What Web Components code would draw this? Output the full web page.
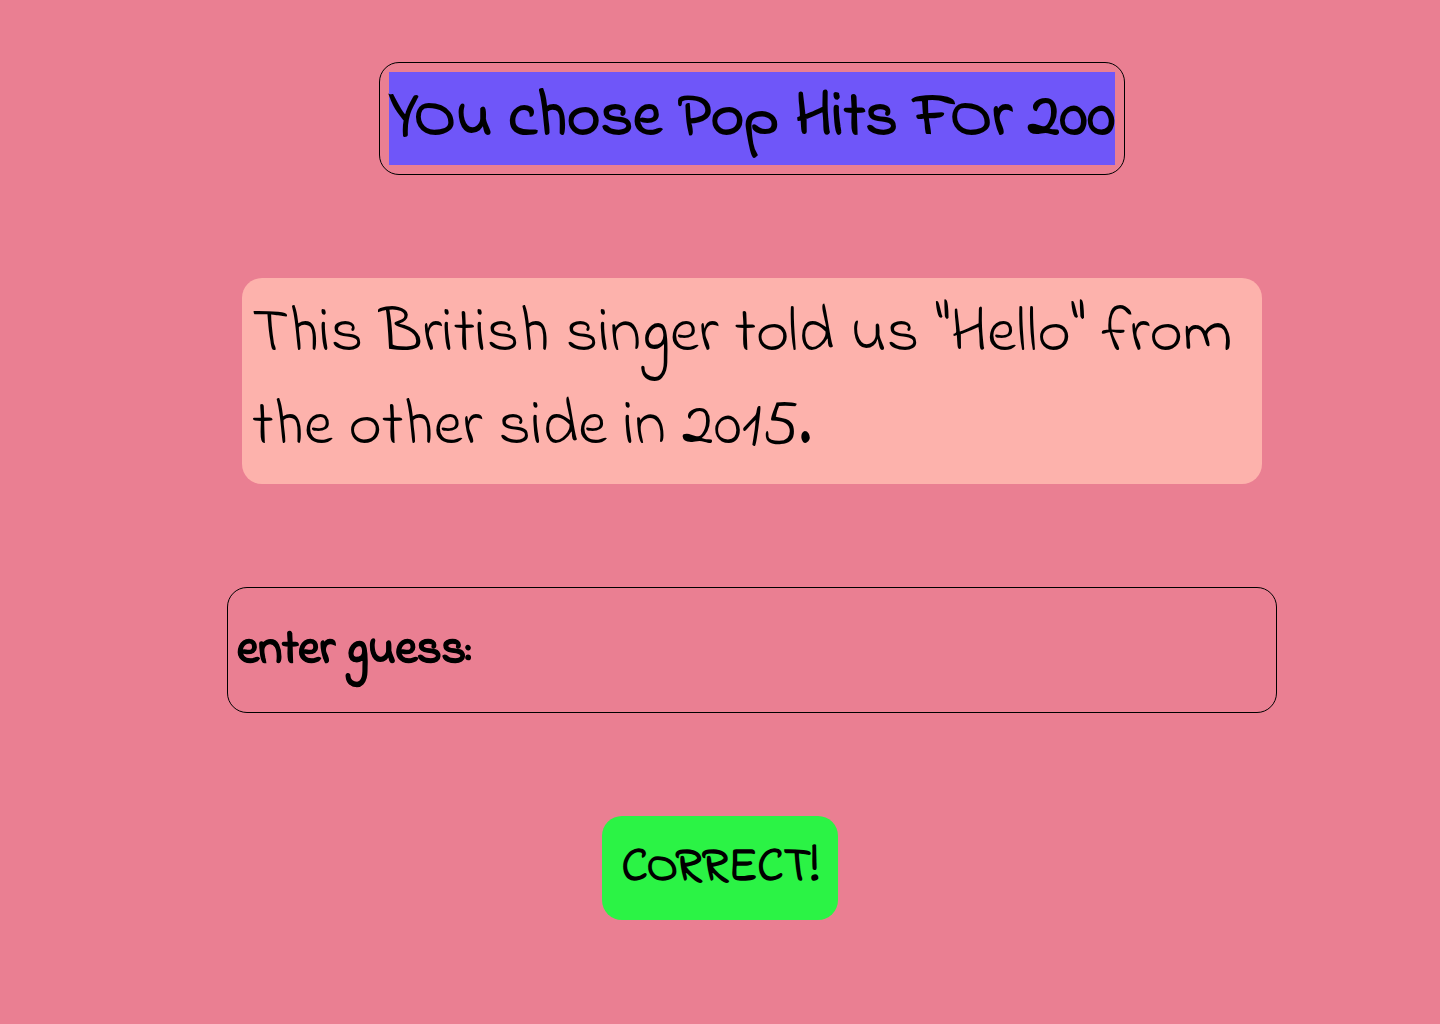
<!DOCTYPE html>
<html lang="en">
<head>
<meta charset="utf-8">
<meta name="viewport" content="width=device-width, initial-scale=1">
<title>Pop Hits For 200</title>
<style>
  body { margin: 0; background: #ea7f92; color: #000; font-family: "Indie Flower", Lato, sans-serif; }
</style>
</head>
<body>
<quiz-page>
  <category-title>YOu chose Pop Hits FOr 200</category-title>
  <quiz-question>This British singer told us "Hello" from the other side in 2015.</quiz-question>
  <guess-form label="enter guess:"></guess-form>
  <result-button slot="result">CORRECT!</result-button>
</quiz-page>
<script>
class ShadowElement extends HTMLElement {
  constructor() {
    super();
    this.attachShadow({ mode: 'open' }).innerHTML = this.constructor.markup;
  }
}

customElements.define('quiz-page', class extends ShadowElement {
  static markup = `
    <style>
      :host { display: block; }
      main { display: flex; flex-direction: column; align-items: center; gap: 103px; padding: 62px 0; will-change: opacity; }
      .round { box-sizing: border-box; width: 100%; padding-left: 64px; display: flex; flex-direction: column; align-items: center; gap: 103px; }
    </style>
    <main>
      <div class="round"><slot></slot></div>
      <slot name="result"></slot>
    </main>`;
});

customElements.define('category-title', class extends ShadowElement {
  static markup = `
    <style>
      :host { display: block; border: 1px solid #000; border-radius: 20px; padding: 9px; }
      h1 { margin: 0; background: #6f56f9; font-size: 64px; line-height: 93px; font-weight: 700; }
    </style>
    <h1><slot></slot></h1>`;
});

customElements.define('quiz-question', class extends ShadowElement {
  static markup = `
    <style>
      :host { display: block; box-sizing: border-box; width: 100%; max-width: 1020px; padding: 10px; border-radius: 20px; background: #fdb2ac; }
      p { margin: 0; font-size: 64px; line-height: 93px; }
    </style>
    <p><slot></slot></p>`;
});

customElements.define('guess-form', class extends ShadowElement {
  static markup = `
    <style>
      :host { display: block; box-sizing: border-box; width: 100%; max-width: 1050px; border: 1px solid #000; border-radius: 20px; padding: 26px 9px; }
      form { display: flex; align-items: center; gap: 10px; font-size: 48px; line-height: 72px; font-weight: 700; -webkit-text-stroke: 1px #000; }
      input { flex: 1; min-width: 0; height: 72px; box-sizing: border-box; padding: 0; border: 0; outline: 0; background: transparent; color: inherit; font: inherit; }
    </style>
    <form><label for="guess"></label><input id="guess" type="text" autocomplete="off"></form>`;
  connectedCallback() {
    this.shadowRoot.querySelector('label').textContent = this.getAttribute('label');
  }
});

customElements.define('result-button', class extends ShadowElement {
  static markup = `
    <style>
      :host { display: block; }
      button { display: block; border: 0; border-radius: 20px; padding: 16px 20px; background: #2bf345; color: inherit; font: inherit; font-size: 48px; line-height: 72px; font-weight: 700; }
    </style>
    <button type="button"><slot></slot></button>`;
});
</script>
</body>
</html>
